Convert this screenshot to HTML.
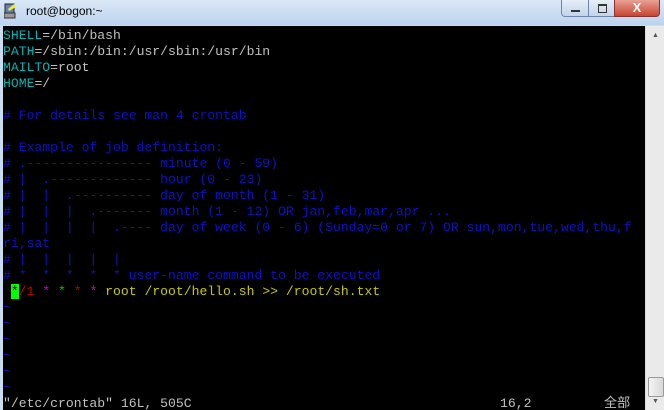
<html><head><style>
body{margin:0;width:664px;height:410px;overflow:hidden;background:#c9dcf0;position:relative;font-family:"Liberation Sans",sans-serif}
.tb{position:absolute;left:0;top:0;width:664px;height:25px;background:linear-gradient(#dbe8f7,#bcd3ee)}
.tt{position:absolute;left:26px;top:4px;font-size:12px;color:#000}
.ic{position:absolute;left:4px;top:3px;width:14px;height:16px}
.btn{position:absolute;top:0;height:17px;border:1px solid #6d85a8;border-top:none;background:linear-gradient(#e6eef8,#c3d4ea);box-sizing:border-box}
.term{position:absolute;left:3px;top:26px;width:642px;height:384px;background:#000;font-family:"Liberation Mono","Noto Sans CJK SC",monospace;font-size:10.45px;line-height:16px;color:#c0c0c0;white-space:pre;overflow:hidden}
.term pre{margin:0;padding-top:2px;font:inherit;font-size:13.1px;line-height:16px}
.sb{position:absolute;left:645px;top:26px;width:19px;height:384px;background:#eaeaea;border-left:1px solid #ddd}
.c{color:#00b4b4}.b{color:#1010c8}.y{color:#c8c800}.r{color:#c80000}.m{color:#c800c8}.g{color:#00c800}
.cur{background:#00ff00;color:#000}
.st{position:absolute;top:370px;font-size:13.1px;line-height:16px}
</style></head><body>
<div class="tb"></div>
<svg class="ic" viewBox="0 0 14 16"><rect x="1" y="1" width="9" height="9" fill="#6a7fb8" stroke="#223" /><path d="M4 6l6-5 2 3-7 4z" fill="#ee2"/><rect x="0" y="10" width="11" height="5" fill="#999" stroke="#333"/></svg>
<div class="tt">root@bogon:~</div>
<div class="btn" style="left:561px;width:28px;border-radius:0 0 0 4px"><div style="position:absolute;left:9px;top:10px;width:9px;height:2px;background:#333"></div></div>
<div class="btn" style="left:588px;width:27px"><div style="position:absolute;left:9px;top:4px;width:7px;height:6px;border:1px solid #333;border-top-width:2px"></div></div>
<div class="btn" style="left:614px;width:46px;background:linear-gradient(#e8a196,#c8442f);border-color:#833;border-radius:0 0 4px 0;color:#fff;font-weight:bold;font-size:13px;text-align:center;line-height:15px">X</div>
<div class="term"><pre><span class="c">SHELL</span>=/bin/bash
<span class="c">PATH</span>=/sbin:/bin:/usr/sbin:/usr/bin
<span class="c">MAILTO</span>=root
<span class="c">HOME</span>=/

<span class="b"># For details see man 4 crontab</span>

<span class="b"># Example of job definition:
# .---------------- minute (0 - 59)
# |  .------------- hour (0 - 23)
# |  |  .---------- day of month (1 - 31)
# |  |  |  .------- month (1 - 12) OR jan,feb,mar,apr ...
# |  |  |  |  .---- day of week (0 - 6) (Sunday=0 or 7) OR sun,mon,tue,wed,thu,f
ri,sat
# |  |  |  |  |
# *  *  *  *  * user-name command to be executed</span>
 <span class="cur">*</span><span class="r">/1</span> <span class="m">*</span> <span class="g">*</span> <span class="r">*</span> <span class="m">*</span> <span class="y">root /root/hello.sh &gt;&gt; /root/sh.txt</span>
<span class="b">~
~
~
~
~
~</span>
"/etc/crontab" 16L, 505C</pre>
<div class="st" style="left:497px">16,2</div>
<div class="st" style="left:601px">全部</div></div>
<div class="sb"><div style="position:absolute;left:6px;top:6px;font-size:7px;color:#555">▲</div><div style="position:absolute;left:2px;top:351px;width:14px;height:18px;border:1px solid #999;border-radius:2px;background:linear-gradient(90deg,#f4f4f4,#d8d8d8)"></div><div style="position:absolute;left:6px;top:372px;font-size:7px;color:#555">▼</div></div>
</body></html>
